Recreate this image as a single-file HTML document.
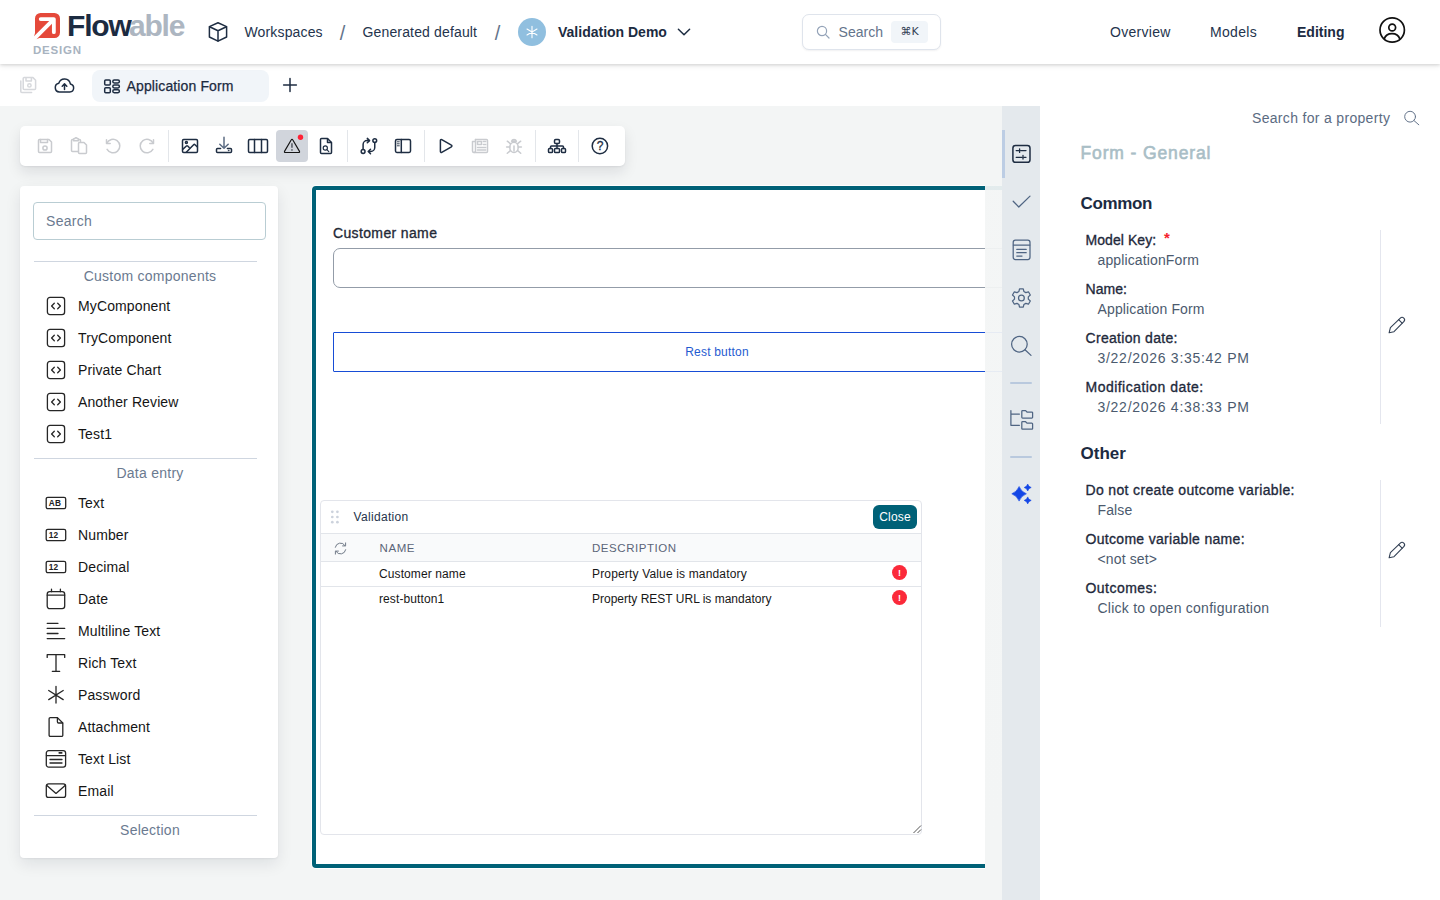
<!DOCTYPE html>
<html lang="en">
<head>
<meta charset="utf-8">
<title>Flowable Design - Application Form</title>
<style>
*{box-sizing:border-box;margin:0;padding:0}
html,body{width:1440px;height:900px;overflow:hidden;background:#fff}
body{font-family:"Liberation Sans",Arial,sans-serif;font-size:14px;color:#1e293b;position:relative}
.abs{position:absolute}
.t{position:absolute;white-space:nowrap;line-height:20px;font-size:14px;letter-spacing:.15px}
svg{position:absolute;overflow:visible}
.ic{fill:none;stroke:#1e2d42;stroke-width:1.5;stroke-linecap:round;stroke-linejoin:round}
.dis{stroke:#c9cbcf}
.sep{top:24px;width:1px;height:32px;background:#e3e6ea}
.pi{fill:none;stroke:#262626;stroke-linecap:round;stroke-linejoin:round}
.lb{font-weight:400;color:#1e293b;-webkit-text-stroke:.33px #1e293b;letter-spacing:.3px}
.vl{color:#4b5a6e;letter-spacing:.13px}
/* header */
#hdr{left:0;top:0;width:1440px;height:64px;background:#fff;box-shadow:0 1px 3px rgba(0,0,0,.13),0 2px 6px rgba(0,0,0,.08);z-index:30}
#tabs{left:0;top:64px;width:1440px;height:42px;background:#fff;z-index:20}
#main{left:0;top:106px;width:1002px;height:794px;background:#f3f5f5;overflow:hidden;z-index:1}
#strip{left:1002px;top:106px;width:38px;height:794px;background:#e4e9ed;z-index:5}
#props{left:1040px;top:106px;width:400px;height:794px;background:#fff;z-index:5}
</style>
</head>
<body>

<!-- ================= HEADER ================= -->
<div id="hdr" class="abs">
  <!-- logo -->
  <svg style="left:30px;top:8px" width="40" height="36" viewBox="30 8 40 36">
    <path d="M40.5 13 H54.5 a5.5 5.5 0 0 1 5.5 5.5 V32.5 a5.5 5.5 0 0 1 -5.5 5.5 H39.5 L33 40.2 L35 33 V18.5 a5.5 5.5 0 0 1 5.5 -5.5 z" fill="#e5493a"/>
    <path d="M40.7 19.1 H53.85 V32.2" fill="none" stroke="#fff" stroke-width="3.8" stroke-linecap="round" stroke-linejoin="round"/>
    <path d="M31.6 41.3 L53.85 19.1" fill="none" stroke="#fff" stroke-width="3.9"/>
  </svg>
  <div class="t" id="lg1" style="left:67px;top:8px;font-size:30px;line-height:36px;font-weight:700;color:#1c2b41;letter-spacing:-1.2px">Flow</div>
  <div class="t" id="lg2" style="left:129px;top:8px;font-size:30px;line-height:36px;font-weight:700;color:#adb6c1;letter-spacing:-1.2px">able</div>
  <div class="t" id="lg3" style="left:33px;top:42px;font-size:11.5px;line-height:16px;font-weight:700;color:#a8b3c0;letter-spacing:.8px">DESIGN</div>
  <!-- cube -->
  <svg class="ic" style="left:208px;top:22px" width="20" height="20" viewBox="0 0 20 20" stroke-width="1.2">
    <path d="M10 0.8 L18.6 4.6 V15 L10 19.2 L1.4 15 V4.6 Z"/><path d="M1.6 4.8 L10 8.8 L18.4 4.8 M10 8.8 V19"/>
  </svg>
  <div class="t" style="left:244.5px;top:22px;color:#24344d">Workspaces</div>
  <div class="t" style="left:339.8px;top:22.7px;font-size:20px;color:#64748b;letter-spacing:0">/</div>
  <div class="t" style="left:362.5px;top:22px;color:#24344d">Generated default</div>
  <div class="t" style="left:494.8px;top:22.7px;font-size:20px;color:#64748b;letter-spacing:0">/</div>
  <div class="abs" style="left:518px;top:18px;width:28px;height:28px;border-radius:50%;background:#90bfdf"></div>
  <svg style="left:524px;top:24px" width="16" height="16" viewBox="0 0 16 16" fill="none" stroke="#fff" stroke-width="1.12" stroke-linecap="round">
    <path d="M8 2.2 V13.8 M3 5.1 L13 10.9 M13 5.1 L3 10.9"/>
  </svg>
  <div class="t" style="left:558px;top:22px;font-weight:700;color:#1c2b41;letter-spacing:0">Validation Demo</div>
  <svg class="ic" style="left:676px;top:24px" width="16" height="16" viewBox="0 0 16 16" stroke-width="1.6"><path d="M2.4 5.2 L8 10.8 L13.6 5.2"/></svg>
  <!-- search -->
  <div class="abs" style="left:802px;top:14px;width:139px;height:36px;border:1px solid #dfe4ec;border-radius:7px;background:#fff;box-shadow:0 1px 2px rgba(15,23,42,.06)"></div>
  <svg style="left:816px;top:25px" width="14" height="14" viewBox="0 0 14 14" fill="none" stroke="#94a3b8" stroke-width="1.2" stroke-linecap="round"><circle cx="6" cy="6" r="4.6"/><path d="M9.4 9.4 L13 13"/></svg>
  <div class="t" style="left:838.5px;top:22px;color:#64748b;letter-spacing:.05px">Search</div>
  <div class="abs" style="left:891px;top:21px;width:37px;height:22px;border-radius:4px;background:#f1f5f9"></div>
  <div class="t" style="left:891px;top:22px;width:37px;text-align:center;font-size:11px;color:#334155;letter-spacing:0;font-family:'DejaVu Sans','Liberation Sans',sans-serif">&#8984;K</div>
  <!-- nav -->
  <div class="t" style="left:1110px;top:22px;color:#24344d;letter-spacing:.3px">Overview</div>
  <div class="t" style="left:1210px;top:22px;color:#24344d;letter-spacing:.3px">Models</div>
  <div class="t" style="left:1297px;top:22px;font-weight:700;color:#1c2b41;letter-spacing:0">Editing</div>
  <svg style="left:1378px;top:16px" width="28" height="28" viewBox="0 0 28 28" fill="none" stroke="#111" stroke-width="1.7">
    <circle cx="14.2" cy="14" r="12.2"/><circle cx="14.2" cy="11.5" r="3.4"/><path d="M6.2 23 C7.5 18.8 10.5 17.6 14 17.6 C17.5 17.6 20.5 18.8 21.8 23"/>
  </svg>
</div>

<!-- ================= TAB BAR ================= -->
<div id="tabs" class="abs">
  <svg class="ic" style="left:18px;top:11px;stroke:#d6d8dc" width="20" height="20" viewBox="0 0 20 20" stroke-width="1">
    <path d="M6 2.6 H15 L17.6 5.2 V13.6 a1 1 0 0 1 -1 1 H6.2 a1 1 0 0 1 -1 -1 V3.6 a1 1 0 0 1 1 -1 z"/><path d="M8 2.8 V6 H13.4 V2.8"/><circle cx="11.4" cy="10.4" r="1.7"/><path d="M2.8 6 V16.4 a1 1 0 0 0 1 1 H13.6"/>
  </svg>
  <svg class="ic" style="left:54px;top:11px" width="21" height="20" viewBox="0 0 21 20" stroke-width="1.02">
    <path d="M5.4 17 a4.4 4.4 0 0 1 -0.6 -8.7 a6 6 0 0 1 11.6 0.6 a4.1 4.1 0 0 1 -0.6 8.1 Z"/><path d="M10.5 14.6 V9.2 M8.2 11.2 L10.5 8.9 L12.8 11.2"/>
  </svg>
  <div class="abs" style="left:92px;top:6px;width:177px;height:32px;border-radius:8px;background:#f1f5f9"></div>
  <svg class="ic" style="left:104px;top:14px" width="16" height="16" viewBox="0 0 16 16" stroke-width="1.15">
    <rect x="0.7" y="2.1" width="5.6" height="4.9" rx="1"/><rect x="0.7" y="9.8" width="5.6" height="4.9" rx="1"/><rect x="8.8" y="2.1" width="6.6" height="2.9" rx="1.4"/><rect x="8.8" y="7" width="6.6" height="2.9" rx="1.4"/><rect x="8.8" y="11.8" width="6.6" height="2.9" rx="1.4"/>
  </svg>
  <div class="t" style="left:126.5px;top:12px;color:#1c2b41;letter-spacing:.13px;-webkit-text-stroke:.25px #1c2b41">Application Form</div>
  <svg class="ic" style="left:282px;top:13px" width="16" height="16" viewBox="0 0 16 16" stroke-width="1.15"><path d="M8 1.6 V14.4 M1.6 8 H14.4"/></svg>
</div>

<!-- ================= MAIN ================= -->
<div id="main" class="abs">
  <!-- toolbar (coords relative to #main: y-106) -->
  <div class="abs" id="tb" style="left:20px;top:20px;width:605px;height:40px;background:#fff;border-radius:5px;box-shadow:0 1px 2px rgba(15,23,42,.06),0 6px 14px rgba(15,23,42,.10)"></div>
  <div class="abs sep" style="left:168px"></div><div class="abs sep" style="left:347px"></div><div class="abs sep" style="left:424px"></div><div class="abs sep" style="left:535px"></div><div class="abs sep" style="left:578px"></div>
  <div class="abs" style="left:276px;top:24px;width:32px;height:32px;border-radius:4px;background:#d1d5dc"></div>
  <svg class="ic dis" style="left:35px;top:30px" width="20" height="20" viewBox="0 0 20 20" stroke-width="1"><path d="M4.5 3.5 H14 L16.5 6 V15.5 a1 1 0 0 1 -1 1 H4.5 a1 1 0 0 1 -1 -1 V4.5 a1 1 0 0 1 1 -1 z"/><path d="M5.5 3.5 V6.5 H12.5 V3.5"/><circle cx="10" cy="12" r="2.1"/></svg>
  <svg class="ic dis" style="left:69px;top:30px" width="20" height="20" viewBox="0 0 20 20" stroke-width="1"><path d="M9 15.5 H3.5 a1 1 0 0 1 -1 -1 V4.5 a1 1 0 0 1 1 -1 H4.5 M9.5 3.5 H10.5 a1 1 0 0 1 1 1 V6"/><path d="M4.5 4.7 V3.5 a1 1 0 0 1 1 -1 H5.9 a1.15 1.15 0 0 1 2.2 0 H8.5 a1 1 0 0 1 1 1 V4.7 z"/><path d="M10.5 6.5 H15 L17.5 9 V16.5 a1 1 0 0 1 -1 1 H10.5 a1 1 0 0 1 -1 -1 V7.5 a1 1 0 0 1 1 -1 z"/></svg>
  <svg class="ic dis" style="left:103px;top:30px" width="20" height="20" viewBox="0 0 20 20" stroke-width="1"><path d="M3.84 7.13 A6.8 6.8 0 1 1 4.11 13.4"/><path d="M3.5 3.8 V7.5 H7.2"/></svg>
  <svg class="ic dis" style="left:137px;top:30px" width="20" height="20" viewBox="0 0 20 20" stroke-width="1"><path d="M16.16 7.13 A6.8 6.8 0 1 0 15.89 13.4"/><path d="M16.5 3.8 V7.5 H12.8"/></svg>
  <svg class="ic" style="left:180px;top:30px" width="20" height="20" viewBox="0 0 20 20" stroke-width="1.05"><rect x="2.5" y="3.5" width="15" height="13" rx="1.2"/><circle cx="6.4" cy="6.4" r="1"/><path d="M2.7 13.4 L6.4 10 a1 1 0 0 1 1.3 0 L9.2 11.6"/><path d="M6.3 16.3 L13.6 8.7 a1 1 0 0 1 1.4 0 L17.4 11"/></svg>
  <svg class="ic" style="left:214px;top:30px" width="20" height="20" viewBox="0 0 20 20" stroke-width="1.05"><path d="M10 1.3 V11.8 M5.8 8.2 L10 12.3 L14.2 8.2" stroke="#5d6d84"/><path d="M6.6 12.5 H3.5 a1 1 0 0 0 -1 1 V15.5 a1 1 0 0 0 1 1 H16.5 a1 1 0 0 0 1 -1 V13.5 a1 1 0 0 0 -1 -1 H13.4"/><circle cx="14.6" cy="14.5" r=".45" fill="#1e2d42" stroke-width=".5"/></svg>
  <svg class="ic" style="left:248px;top:30px" width="20" height="20" viewBox="0 0 20 20" stroke-width="1.05"><rect x="0.5" y="3.5" width="19" height="13" rx="1.2"/><path d="M6.5 3.6 V16.4 M13.5 3.6 V16.4"/></svg>
  <svg class="ic" style="left:282px;top:30px" width="20" height="20" viewBox="0 0 20 20" stroke-width="1.1"><path d="M9.3 3.8 L2.5 15.4 a.75 .75 0 0 0 .65 1.1 H16.85 a.75 .75 0 0 0 .65 -1.1 L10.7 3.8 a.8 .8 0 0 0 -1.4 0 z" stroke="#141414" stroke-width="1.15"/><path d="M9.95 7.3 V11.7" stroke="#5a5f68" stroke-width="1.6" stroke-linecap="butt"/><rect x="9.15" y="13.2" width="1.6" height="1.5" fill="#5a5f68" stroke="none"/><circle cx="18.5" cy="1.3" r="2.7" fill="#ff2236" stroke="none"/></svg>
  <svg class="ic" style="left:316px;top:30px" width="20" height="20" viewBox="0 0 20 20" stroke-width="1.05"><path d="M5.5 2.5 H11.5 L15.5 6.5 V16.5 a1 1 0 0 1 -1 1 H5.5 a1 1 0 0 1 -1 -1 V3.5 a1 1 0 0 1 1 -1 z"/><path d="M11.5 2.7 V6.5 H15.3"/><circle cx="9.3" cy="12" r="2.1" stroke-width="1.15"/><path d="M10.9 13.7 L12.8 15.6" stroke-width="1.15"/></svg>
  <svg class="ic" style="left:359px;top:30px" width="20" height="20" viewBox="0 0 20 20" stroke-width="1.1"><circle cx="4.1" cy="15.5" r="1.9"/><circle cx="15.75" cy="4.6" r="1.9"/><path d="M4.1 13.5 V8.6 a4 4 0 0 1 4 -4 H10.3 M8.3 2.4 L10.6 4.6 L8.3 6.8"/><path d="M15.75 6.6 V11.5 a4 4 0 0 1 -4 4 H9.5 M11.5 13.3 L9.2 15.5 L11.5 17.7"/></svg>
  <svg class="ic" style="left:393px;top:30px" width="20" height="20" viewBox="0 0 20 20" stroke-width="1.05"><rect x="2.5" y="3.5" width="15" height="13" rx="1.4"/><path d="M8.3 3.6 V16.4" stroke-width="1.5"/><path d="M4.3 5.8 H6.3 M4.3 7.8 H6.3 M4.3 9.8 H6.3" stroke-width=".9"/></svg>
  <svg class="ic" style="left:436px;top:30px" width="20" height="20" viewBox="0 0 20 20" stroke-width="1.1"><path d="M4.4 4.4 a.9 .9 0 0 1 1.35 -.8 L15.4 9.2 a.9 .9 0 0 1 0 1.6 L5.75 16.4 a.9 .9 0 0 1 -1.35 -.8 z"/></svg>
  <svg class="ic dis" style="left:470px;top:30px" width="20" height="20" viewBox="0 0 20 20" stroke-width="1"><path d="M5.5 3.5 H16.5 a1 1 0 0 1 1 1 V15.5 a1 1 0 0 1 -1 1 H4 a1.5 1.5 0 0 1 -1.5 -1.5 V5.5 H5.5"/><path d="M5.5 3.5 V15 a1.5 1.5 0 0 1 -1.5 1.5"/><rect x="7.5" y="5.5" width="4" height="3"/><path d="M13.3 5.5 H15.7 M13.3 8.5 H15.7 M7.5 11.5 H15.7 M7.5 14 H15.7"/></svg>
  <svg class="ic dis" style="left:504px;top:30px" width="20" height="20" viewBox="0 0 20 20" stroke-width="1"><ellipse cx="10" cy="11.4" rx="4.2" ry="5.1"/><path d="M7.6 5.3 a2.5 2.5 0 0 1 4.8 0 z"/><path d="M10 10 V15"/><path d="M2.6 10.9 H5.8 M14.2 10.9 H17.4 M3.3 5.2 L6.6 7.8 M16.7 5.2 L13.4 7.8 M3.3 17.3 L6.6 14.4 M16.7 17.3 L13.4 14.4"/></svg>
  <svg class="ic" style="left:547px;top:30px" width="20" height="20" viewBox="0 0 20 20" stroke-width="1.05"><rect x="7.5" y="3.5" width="5" height="4" rx="1.2"/><rect x="1.5" y="12.5" width="4" height="4" rx="1.1"/><rect x="7.5" y="12.5" width="5" height="4" rx="1.1"/><rect x="14.5" y="12.5" width="4" height="4" rx="1.1"/><path d="M3.5 12.5 V11 a1 1 0 0 1 1 -1 H15.5 a1 1 0 0 1 1 1 V12.5 M10 7.5 V12.5"/></svg>
  <svg class="ic" style="left:590px;top:30px" width="20" height="20" viewBox="0 0 20 20" stroke-width="1.1"><circle cx="9.9" cy="10" r="7.7"/></svg>
  <div class="t" style="left:590px;top:30px;width:20px;text-align:center;font-size:12px;font-weight:400;-webkit-text-stroke:.3px #1e2d42;color:#1e2d42;letter-spacing:0">?</div>
  <!-- palette -->
  <div class="abs" id="pal" style="left:20px;top:80px;width:258px;height:672px;background:#fff;border-radius:4px;box-shadow:0 1px 2px rgba(15,23,42,.05),0 6px 16px rgba(15,23,42,.09)"></div>
  <div class="abs" style="left:33px;top:96px;width:233px;height:38px;border:1px solid #b9cdd3;border-radius:4px;background:#fff"></div>
  <div class="t" style="left:46px;top:105px;color:#6b7a90;letter-spacing:.3px">Search</div>
  <div class="abs" style="left:34px;top:155px;width:223px;height:1px;background:#cfd6e0"></div>
  <div class="t" style="left:34px;top:160px;width:232px;text-align:center;color:#6b7a90;letter-spacing:.25px">Custom components</div>
  <svg class="pi" style="left:46px;top:190px" width="20" height="20" viewBox="0 0 20 20" stroke-width="1.3"><rect x="1.4" y="1.4" width="17.2" height="17.2" rx="2.6"/><path d="M8.3 7.3 L5.6 10 L8.3 12.7 M11.7 7.3 L14.4 10 L11.7 12.7"/></svg>
  <div class="t" style="left:78px;top:190px;color:#151515;letter-spacing:.12px">MyComponent</div>
  <svg class="pi" style="left:46px;top:222px" width="20" height="20" viewBox="0 0 20 20" stroke-width="1.3"><rect x="1.4" y="1.4" width="17.2" height="17.2" rx="2.6"/><path d="M8.3 7.3 L5.6 10 L8.3 12.7 M11.7 7.3 L14.4 10 L11.7 12.7"/></svg>
  <div class="t" style="left:78px;top:222px;color:#151515;letter-spacing:.12px">TryComponent</div>
  <svg class="pi" style="left:46px;top:254px" width="20" height="20" viewBox="0 0 20 20" stroke-width="1.3"><rect x="1.4" y="1.4" width="17.2" height="17.2" rx="2.6"/><path d="M8.3 7.3 L5.6 10 L8.3 12.7 M11.7 7.3 L14.4 10 L11.7 12.7"/></svg>
  <div class="t" style="left:78px;top:254px;color:#151515;letter-spacing:.12px">Private Chart</div>
  <svg class="pi" style="left:46px;top:286px" width="20" height="20" viewBox="0 0 20 20" stroke-width="1.3"><rect x="1.4" y="1.4" width="17.2" height="17.2" rx="2.6"/><path d="M8.3 7.3 L5.6 10 L8.3 12.7 M11.7 7.3 L14.4 10 L11.7 12.7"/></svg>
  <div class="t" style="left:78px;top:286px;color:#151515;letter-spacing:.12px">Another Review</div>
  <svg class="pi" style="left:46px;top:318px" width="20" height="20" viewBox="0 0 20 20" stroke-width="1.3"><rect x="1.4" y="1.4" width="17.2" height="17.2" rx="2.6"/><path d="M8.3 7.3 L5.6 10 L8.3 12.7 M11.7 7.3 L14.4 10 L11.7 12.7"/></svg>
  <div class="t" style="left:78px;top:318px;color:#151515;letter-spacing:.12px">Test1</div>
  <div class="abs" style="left:34px;top:352px;width:223px;height:1px;background:#cfd6e0"></div>
  <div class="t" style="left:34px;top:357px;width:232px;text-align:center;color:#6b7a90;letter-spacing:.25px">Data entry</div>
  <svg class="pi" style="left:46px;top:387px" width="20" height="20" viewBox="0 0 20 20" stroke-width="1.3"><rect x="0.2" y="4.3" width="19.5" height="11.4" rx="1.6"/><text x="2.7" y="12.9" font-size="8.3" font-weight="700" font-family="Liberation Sans,Arial,sans-serif" fill="#222" stroke="none" letter-spacing="0.2">AB</text></svg>
  <div class="t" style="left:78px;top:387px;color:#151515;letter-spacing:.12px">Text</div>
  <svg class="pi" style="left:46px;top:419px" width="20" height="20" viewBox="0 0 20 20" stroke-width="1.3"><rect x="0.2" y="4.3" width="19.5" height="11.4" rx="1.6"/><text x="2.7" y="12.9" font-size="8.3" font-weight="700" font-family="Liberation Sans,Arial,sans-serif" fill="#222" stroke="none" letter-spacing="0.2">12</text></svg>
  <div class="t" style="left:78px;top:419px;color:#151515;letter-spacing:.12px">Number</div>
  <svg class="pi" style="left:46px;top:451px" width="20" height="20" viewBox="0 0 20 20" stroke-width="1.3"><rect x="0.2" y="4.3" width="19.5" height="11.4" rx="1.6"/><text x="2.7" y="12.9" font-size="8.3" font-weight="700" font-family="Liberation Sans,Arial,sans-serif" fill="#222" stroke="none" letter-spacing="0.2">12</text></svg>
  <div class="t" style="left:78px;top:451px;color:#151515;letter-spacing:.12px">Decimal</div>
  <svg class="pi" style="left:46px;top:483px" width="20" height="20" viewBox="0 0 20 20" stroke-width="1.3"><rect x="1.2" y="2.7" width="17.5" height="17" rx="2.6"/><path d="M5.5 0.2 V2.7 M14.4 0.2 V2.7 M1.3 6.2 H18.6"/></svg>
  <div class="t" style="left:78px;top:483px;color:#151515;letter-spacing:.12px">Date</div>
  <svg class="pi" style="left:46px;top:515px" width="20" height="20" viewBox="0 0 20 20" stroke-width="1.3"><path d="M1.2 2.3 H12 M1.2 7.4 H18.7 M1.2 12.5 H12 M1.2 17.6 H18.7"/></svg>
  <div class="t" style="left:78px;top:515px;color:#151515;letter-spacing:.12px">Multiline Text</div>
  <svg class="pi" style="left:46px;top:547px" width="20" height="20" viewBox="0 0 20 20" stroke-width="1.3"><path d="M1.2 4.4 V1.7 H18.7 V4.4 M10 1.7 V18.3 M6.3 18.3 H13.7"/></svg>
  <div class="t" style="left:78px;top:547px;color:#151515;letter-spacing:.12px">Rich Text</div>
  <svg class="pi" style="left:46px;top:579px" width="20" height="20" viewBox="0 0 20 20" stroke-width="1.3"><path d="M10 1.3 V18.1 M2.7 5.5 L17.2 14.6 M17.2 5.5 L2.7 14.6"/></svg>
  <div class="t" style="left:78px;top:579px;color:#151515;letter-spacing:.12px">Password</div>
  <svg class="pi" style="left:46px;top:611px" width="20" height="20" viewBox="0 0 20 20" stroke-width="1.3"><path d="M4.3 0.6 H11.4 L16.8 6 V18.2 a1.2 1.2 0 0 1 -1.2 1.2 H4.3 a1.2 1.2 0 0 1 -1.2 -1.2 V1.8 a1.2 1.2 0 0 1 1.2 -1.2 z"/><path d="M11.4 0.8 V4.8 a1.2 1.2 0 0 0 1.2 1.2 H16.6"/></svg>
  <div class="t" style="left:78px;top:611px;color:#151515;letter-spacing:.12px">Attachment</div>
  <svg class="pi" style="left:46px;top:643px" width="20" height="20" viewBox="0 0 20 20" stroke-width="1.3"><rect x="0.3" y="1.7" width="19.3" height="16.4" rx="2.4"/><path d="M0.4 6.6 H19.5 M4 10.5 H16 M4 14 H16"/><path d="M13.2 3.9 H15.8" stroke-width="1.6"/></svg>
  <div class="t" style="left:78px;top:643px;color:#151515;letter-spacing:.12px">Text List</div>
  <svg class="pi" style="left:46px;top:675px" width="20" height="20" viewBox="0 0 20 20" stroke-width="1.3"><rect x="0.3" y="2.9" width="19.3" height="13.5" rx="2.2"/><path d="M0.6 4.2 L10 12.4 L19.4 4.2"/></svg>
  <div class="t" style="left:78px;top:675px;color:#151515;letter-spacing:.12px">Email</div>
  <div class="abs" style="left:34px;top:709px;width:223px;height:1px;background:#cfd6e0"></div>
  <div class="t" style="left:34px;top:714px;width:232px;text-align:center;color:#6b7a90;letter-spacing:.25px">Selection</div>
  <!-- canvas -->
  <div class="abs" id="cv" style="left:312px;top:80px;width:810px;height:682px;background:#fff;border:4px solid #006177;border-radius:4px;box-shadow:0 0 0 1px rgba(255,255,255,.85)"></div>
  <div class="t" style="left:333px;top:117px;font-weight:400;color:#1f2937;-webkit-text-stroke:.33px #1f2937;letter-spacing:.36px">Customer name</div>
  <div class="abs" style="left:333px;top:142px;width:768px;height:40px;border:1px solid #939ca8;border-radius:7px;background:#fff"></div>
  <div class="abs" style="left:333px;top:226px;width:768px;height:40px;border:1px solid #174dd6;border-radius:1px;background:#fff"></div>
  <div class="t" style="left:333px;top:235.5px;width:768px;text-align:center;font-size:12px;color:#1f5bd0;letter-spacing:.2px">Rest button</div>
  <div class="abs" style="left:320px;top:394px;width:602px;height:335px;border:1px solid #e3e5eb;border-radius:4px;background:#fff"></div>
  <svg style="left:330px;top:404px" width="10" height="14" viewBox="0 0 10 14" fill="#ccd2dc"><circle cx="2.3" cy="1.8" r="1.35"/><circle cx="2.3" cy="7" r="1.35"/><circle cx="2.3" cy="12.2" r="1.35"/><circle cx="7.4" cy="1.8" r="1.35"/><circle cx="7.4" cy="7" r="1.35"/><circle cx="7.4" cy="12.2" r="1.35"/></svg>
  <div class="t" style="left:353.5px;top:401px;font-size:12px;color:#26344b;letter-spacing:.32px">Validation</div>
  <div class="abs" style="left:873px;top:399px;width:44px;height:24px;border-radius:6px;background:#006177"></div>
  <div class="t" style="left:873px;top:401px;width:44px;text-align:center;font-size:12px;color:#fff;letter-spacing:.2px">Close</div>
  <div class="abs" style="left:321px;top:427px;width:600px;height:29px;background:#f9fafb;border-top:1px solid #e2e5ea;border-bottom:1px solid #e2e5ea"></div>
  <svg style="left:333px;top:434.5px" width="15" height="15" viewBox="0 0 15 15" fill="none" stroke="#717a88" stroke-width="1" stroke-linecap="round" stroke-linejoin="round"><path d="M2.3 6.3 A5.3 5.3 0 0 1 12 4.6 M12.7 8.7 A5.3 5.3 0 0 1 3 10.4"/><path d="M12.6 1.9 V4.9 H9.6 M2.4 13.1 V10.1 H5.4"/></svg>
  <div class="t" style="left:379.5px;top:432px;font-size:11.5px;color:#5b6578;letter-spacing:.6px">NAME</div>
  <div class="t" style="left:592px;top:432px;font-size:11.5px;color:#5b6578;letter-spacing:.55px">DESCRIPTION</div>
  <div class="abs" style="left:321px;top:480px;width:600px;height:1px;background:#e2e5ea"></div>
  <div class="t" style="left:379px;top:458px;font-size:12px;color:#171717;letter-spacing:.1px">Customer name</div>
  <div class="t" style="left:592px;top:458px;font-size:12px;color:#171717;letter-spacing:.16px">Property Value is mandatory</div>
  <div class="abs" style="left:892px;top:459px;width:15px;height:15px;border-radius:50%;background:#fb2a3a"></div>
  <div class="t" style="left:892px;top:457px;width:15px;text-align:center;font-size:9px;font-weight:700;color:#fff;letter-spacing:0">!</div>
  <div class="t" style="left:379px;top:483px;font-size:12px;color:#171717;letter-spacing:.1px">rest-button1</div>
  <div class="t" style="left:592px;top:483px;font-size:12px;color:#171717;letter-spacing:0px">Property REST URL is mandatory</div>
  <div class="abs" style="left:892px;top:484px;width:15px;height:15px;border-radius:50%;background:#fb2a3a"></div>
  <div class="t" style="left:892px;top:482px;width:15px;text-align:center;font-size:9px;font-weight:700;color:#fff;letter-spacing:0">!</div>
  <svg style="left:911.5px;top:718px" width="10" height="10" viewBox="0 0 10 10" fill="none" stroke="#555" stroke-width="1"><path d="M1.5 9 L9 1.5 M5.5 9 L9 5.5"/></svg>
  <div class="abs" style="left:985px;top:0;width:17px;height:794px;background:linear-gradient(to bottom,rgba(243,245,245,.93) 0%,rgba(243,245,245,.95) 50%,rgba(243,245,245,1) 92%)"></div>
</div>

<!-- ================= RIGHT STRIP ================= -->
<div id="strip" class="abs">
  <div class="abs" style="left:0;top:24px;width:3px;height:48px;background:#bccde4"></div>
  <svg style="left:7.0px;top:36.0px" width="24" height="24" viewBox="0 0 24 24" fill="none" stroke="#1e2d42" stroke-width="1.25" stroke-linecap="round" stroke-linejoin="round"><rect x="3.9" y="3.6" width="17.1" height="16.7" rx="2.6" stroke-width="1.5"/><path d="M7.2 8.6 H9.6 M11.8 8.6 H17 M10.6 6.8 V10.4" stroke-width="1.3"/><path d="M7.2 15.3 H12.8 M15.2 15.3 H17 M14 13.5 V17.1" stroke-width="1.3"/></svg>
  <svg style="left:7.0px;top:84.0px" width="24" height="24" viewBox="0 0 24 24" fill="none" stroke="#4f6583" stroke-width="1.25" stroke-linecap="round" stroke-linejoin="round"><path d="M4.2 11.2 L9.8 17 L21 6.1"/></svg>
  <svg style="left:7.0px;top:132.0px" width="24" height="24" viewBox="0 0 24 24" fill="none" stroke="#4f6583" stroke-width="1.25" stroke-linecap="round" stroke-linejoin="round"><rect x="4.2" y="2.2" width="16.8" height="19.3" rx="2.2"/><path d="M4.4 7.1 H20.8 M7.8 11.4 H17.2 M7.8 14.7 H17.2 M7.8 18 H13"/></svg>
  <svg style="left:7.0px;top:180.0px" width="24" height="24" viewBox="0 0 24 24" fill="none" stroke="#4f6583" stroke-width="1.25" stroke-linecap="round" stroke-linejoin="round"><path d="M9.93 5.45 L10.53 2.79 L14.27 2.79 L14.87 5.45 L16.84 6.59 L19.44 5.78 L21.31 9.01 L19.31 10.86 L19.31 13.14 L21.31 14.99 L19.44 18.22 L16.84 17.41 L14.87 18.55 L14.27 21.21 L10.53 21.21 L9.93 18.55 L7.96 17.41 L5.36 18.22 L3.49 14.99 L5.49 13.14 L5.49 10.86 L3.49 9.01 L5.36 5.78 L7.96 6.59 Z" stroke-linejoin="round"/><circle cx="12.4" cy="12" r="2.9"/></svg>
  <svg style="left:7.0px;top:228.0px" width="24" height="24" viewBox="0 0 24 24" fill="none" stroke="#4f6583" stroke-width="1.25" stroke-linecap="round" stroke-linejoin="round"><circle cx="10.4" cy="10.2" r="7.8"/><path d="M16 15.8 L22 21.4"/></svg>
  <div class="abs" style="left:8px;top:276px;width:22px;height:2px;border-radius:1px;background:#b9c9de"></div>
  <svg style="left:7.0px;top:302.0px" width="24" height="24" viewBox="0 0 24 24" fill="none" stroke="#4f6583" stroke-width="1.25" stroke-linecap="round" stroke-linejoin="round"><path d="M1.9 2.6 V17.3 H10.4 M1.9 6 H10.4"/><path d="M12.8 3.4 a.8 .8 0 0 1 .8 -.8 H16.6 L18 4 H22.8 a.8 .8 0 0 1 .8 .8 V9.2 a.8 .8 0 0 1 -.8 .8 H13.6 a.8 .8 0 0 1 -.8 -.8 z"/><path d="M12.8 14.5 a.8 .8 0 0 1 .8 -.8 H16.6 L18 15.1 H22.8 a.8 .8 0 0 1 .8 .8 V20.4 a.8 .8 0 0 1 -.8 .8 H13.6 a.8 .8 0 0 1 -.8 -.8 z"/></svg>
  <div class="abs" style="left:8px;top:350px;width:22px;height:2px;border-radius:1px;background:#b9c9de"></div>
  <svg style="left:7px;top:376px" width="24" height="24" viewBox="0 0 24 24" fill="#1447e6" stroke="#1447e6" stroke-width=".6" stroke-linejoin="round"><path d="M10.1 4.500000000000001 Q12.144 9.756 17.4 11.8 Q12.144 13.844000000000001 10.1 19.1 Q8.056 13.844000000000001 2.8 11.8 Q8.056 9.756 10.1 4.500000000000001 Z"/><path d="M18.7 2.0 Q19.4 4.8 22.2 5.5 Q19.4 6.2 18.7 9.0 Q18.0 6.2 15.2 5.5 Q18.0 4.8 18.7 2.0 Z"/><path d="M18.7 14.899999999999999 Q19.4 17.7 22.2 18.4 Q19.4 19.099999999999998 18.7 21.9 Q18.0 19.099999999999998 15.2 18.4 Q18.0 17.7 18.7 14.899999999999999 Z"/></svg>
</div>

<!-- ================= PROPERTIES ================= -->
<div id="props" class="abs">
  <div class="t" style="left:212px;top:2px;color:#5b6b82;letter-spacing:.32px">Search for a property</div>
  <svg style="left:363px;top:4px" width="18" height="18" viewBox="0 0 18 18" fill="none" stroke="#64748b" stroke-width="1" stroke-linecap="round"><circle cx="7.1" cy="6.7" r="5.4"/><path d="M11 10.6 L15.8 14.8"/></svg>
  <div class="t" style="left:40.5px;top:35px;font-size:17.5px;line-height:24px;color:#a9bec6;letter-spacing:.87px;-webkit-text-stroke:.6px #a9bec6">Form - General</div>
  <div class="t" style="left:40.5px;top:86px;font-size:17px;line-height:24px;font-weight:700;color:#1c2b41;letter-spacing:-.35px">Common</div>
  <div class="t" style="left:40.5px;top:336px;font-size:17px;line-height:24px;font-weight:700;color:#1c2b41;letter-spacing:0">Other</div>
  <div class="t lb" style="left:45.5px;top:124px;letter-spacing:0.07px">Model Key:</div><div class="t vl" style="left:57.5px;top:144px">applicationForm</div>
  <div class="t lb" style="left:45.5px;top:173px;letter-spacing:0.06px">Name:</div><div class="t vl" style="left:57.5px;top:193px">Application Form</div>
  <div class="t lb" style="left:45.5px;top:222px;letter-spacing:0.31px">Creation date:</div><div class="t vl" style="left:57.5px;top:242px;letter-spacing:.72px">3/22/2026 3:35:42 PM</div>
  <div class="t lb" style="left:45.5px;top:271px;letter-spacing:0.47px">Modification date:</div><div class="t vl" style="left:57.5px;top:291px;letter-spacing:.72px">3/22/2026 4:38:33 PM</div>
  <div class="t lb" style="left:45.5px;top:374px;letter-spacing:0.35px">Do not create outcome variable:</div><div class="t vl" style="left:57.5px;top:394px">False</div>
  <div class="t lb" style="left:45.5px;top:423px;letter-spacing:0.31px">Outcome variable name:</div><div class="t vl" style="left:57.5px;top:443px">&lt;not set&gt;</div>
  <div class="t lb" style="left:45.5px;top:472px;letter-spacing:0.46px">Outcomes:</div><div class="t vl" style="left:57.5px;top:492px;letter-spacing:.25px">Click to open configuration</div>
  <div class="t" style="left:124px;top:122px;font-size:15px;font-weight:700;color:#f5222d;letter-spacing:0">*</div>
  <div class="abs" style="left:340px;top:124px;width:1px;height:194px;background:#e4e6ee"></div>
  <div class="abs" style="left:340px;top:374px;width:1px;height:147px;background:#e4e6ee"></div>
  <svg style="left:347px;top:209px" width="20" height="20" viewBox="0 0 20 20" fill="none" stroke="#334155" stroke-width="1.1" stroke-linecap="round" stroke-linejoin="round"><path d="M3.4 12.7 L13.3 3.1 a2.45 2.45 0 0 1 3.5 3.5 L7 16.7 L2.1 17.8 Z"/><path d="M11.7 4.7 L15.1 8.1"/></svg>
  <svg style="left:347px;top:434px" width="20" height="20" viewBox="0 0 20 20" fill="none" stroke="#334155" stroke-width="1.1" stroke-linecap="round" stroke-linejoin="round"><path d="M3.4 12.7 L13.3 3.1 a2.45 2.45 0 0 1 3.5 3.5 L7 16.7 L2.1 17.8 Z"/><path d="M11.7 4.7 L15.1 8.1"/></svg>
</div>

</body>
</html>
